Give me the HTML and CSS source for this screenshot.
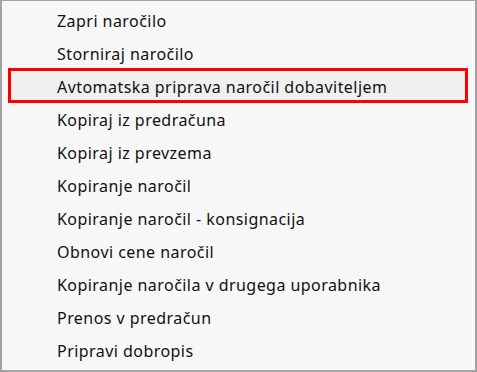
FILE: index.html
```html
<html>
    <head>
        <meta charset="utf-8">
        <link rel="stylesheet" href="styles.css">
    </head>
    <body>
        <div class="menu">
            <div class="menu-inner">
                <div class="item">Zapri naročilo</div>
                <div class="item">Storniraj naročilo</div>
                <div class="item selected">Avtomatska priprava naročil dobaviteljem</div>
                <div class="item">Kopiraj iz predračuna</div>
                <div class="item">Kopiraj iz prevzema</div>
                <div class="item">Kopiranje naročil</div>
                <div class="item">Kopiranje naročil - konsignacija</div>
                <div class="item">Obnovi cene naročil</div>
                <div class="item">Kopiranje naročila v drugega uporabnika</div>
                <div class="item">Prenos v predračun</div>
                <div class="item">Pripravi dobropis</div>
            </div>
        </div>
    </body>
</html>
```

FILE: styles.css
```css
body {
    margin: 0px;
    width: 477px;
    height: 372px;
    font-family: "Noto Sans", "DejaVu Sans", sans-serif;
    font-size: 16px;
    letter-spacing: 0.45px;
    color: #111;
}
.menu {
    box-sizing: border-box;
    width: 477px;
    height: 372px;
    border: 2px solid #a3a3a3;
    border-top-width: 1px;
    background-color: #f7f7f7;
}
.menu-inner {
    box-sizing: border-box;
    height: 100%;
    padding-top: 4px;
    border-right: 1px solid #ffffff;
    border-bottom: 1px solid #ffffff;
    margin-right: 2px;
    margin-bottom: 2px;
}
.item {
    height: 33px;
    line-height: 33px;
    margin: 0px 7px 0px 9px;
    padding-left: 46px;
    white-space: nowrap;
}
.selected {
    position: relative;
    background-color: #f0f0f0;
}
.selected::after {
    content: "";
    position: absolute;
    top: -3px;
    bottom: 1px;
    left: -3px;
    right: -3px;
    border: 3px solid #ff0000;
}
```
